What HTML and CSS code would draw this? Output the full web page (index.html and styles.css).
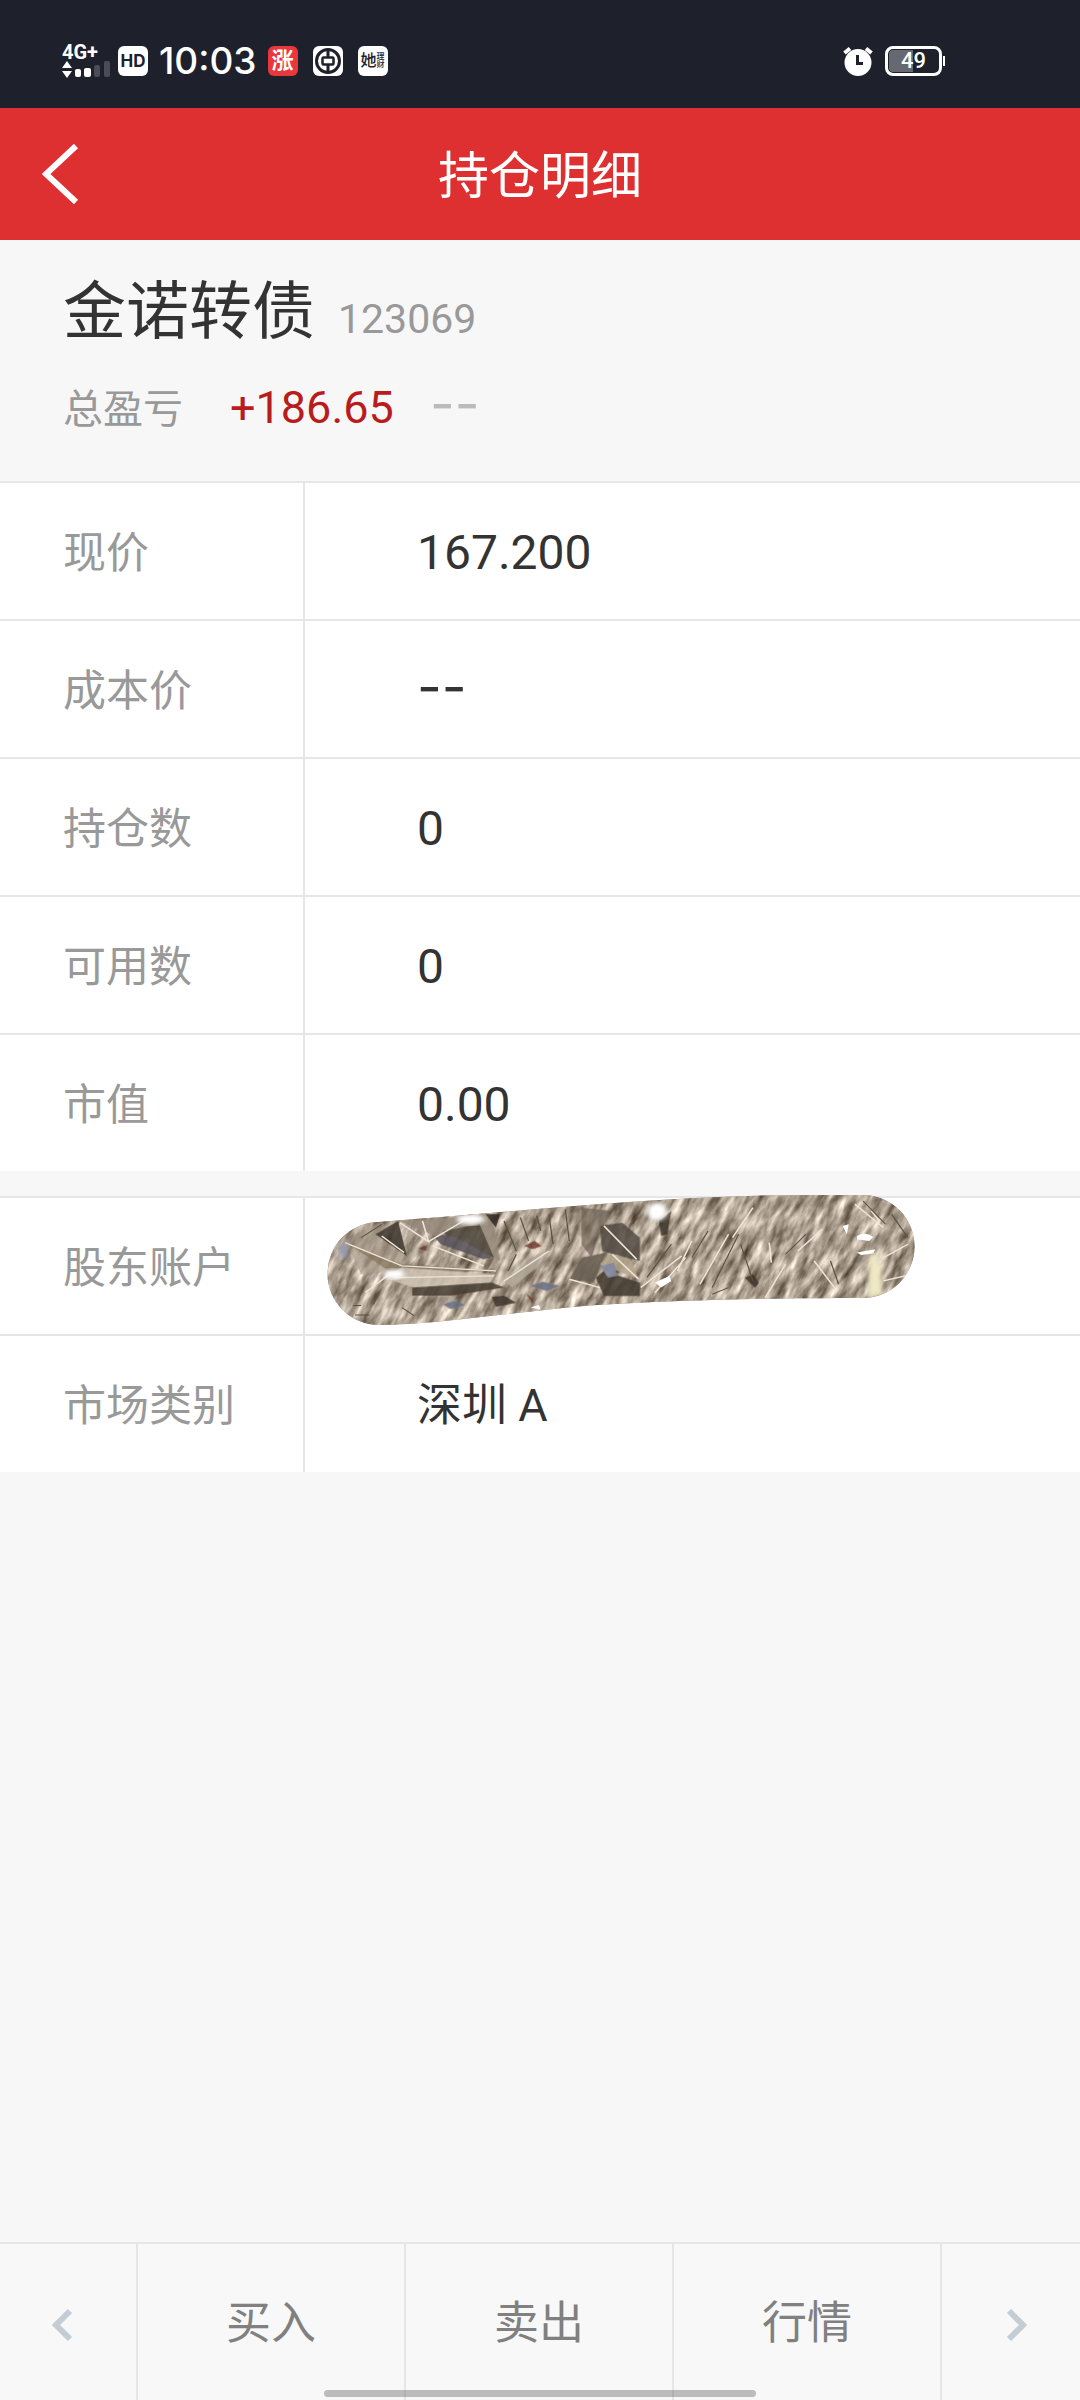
FILE: index.html
```html
<!DOCTYPE html>
<html lang="zh-CN">
<head>
<meta charset="utf-8">
<meta name="viewport" content="width=device-width">
<title>持仓明细</title>
<link rel="stylesheet" href="styles.css">
</head>
<body>
<div class="status">
  <div class="status-group">
    <div class="signal">
      <span class="network">4G+</span>
      <svg width="50" height="18" viewBox="0 0 50 18">
        <path d="M0 8 5 1l5 7zM0 11h10l-5 7z" fill="#fff"/>
        <rect x="13" y="9" width="6" height="8" rx="2" fill="#fff"/>
        <rect x="22" y="8" width="7" height="9" rx="2" fill="#fff"/>
        <rect x="32" y="5" width="6" height="12" rx="2" fill="#4a4d57"/>
        <rect x="42" y="1" width="6" height="16" rx="2" fill="#4a4d57"/>
      </svg>
    </div>
    <span class="badge badge-hd">HD</span>
    <span class="time">10:03</span>
    <div class="apps">
      <span class="badge badge-rise">涨</span>
      <svg width="30" height="30" viewBox="0 0 30 30">
        <rect width="30" height="30" rx="6" fill="#fff"/>
        <circle cx="15" cy="15" r="11.5" fill="none" stroke="#1e212b" stroke-width="3"/>
        <path d="M15 4v7M15 19v7" stroke="#1e212b" stroke-width="3"/>
        <rect x="9.500" y="11.500" width="11" height="7" rx="1" fill="none" stroke="#1e212b" stroke-width="2.500"/>
      </svg>
      <span class="badge badge-her">她<small>理<br>财</small></span>
    </div>
  </div>
  <div class="status-group status-right">
    <svg width="30" height="30" viewBox="0 0 30 30">
      <circle cx="15" cy="16.500" r="13.500" fill="#fff"/>
      <path d="M1.500 7 7 2.500M23 2.500 28.500 7" stroke="#fff" stroke-width="4"/>
      <path d="M14.500 9v8.500H20" fill="none" stroke="#1e212b" stroke-width="3"/>
    </svg>
    <div class="battery"><span>49</span></div>
  </div>
</div>

<header class="header">
  <button class="back" aria-label="返回">
    <svg width="38" height="62" viewBox="0 0 38 62"><path d="M34 3 4 31l30 28" fill="none" stroke="#fff" stroke-width="6"/></svg>
  </button>
  <h1>持仓明细</h1>
</header>

<main class="main">
  <section class="summary">
    <div class="line"><h2>金诺转债</h2><span class="code">123069</span></div>
    <div class="line"><span class="total">总盈亏</span><span class="profit">+186.65</span><span class="rate dash">--</span></div>
  </section>

  <table class="details">
    <tr><th scope="row">现价</th><td>167.200</td></tr>
    <tr><th scope="row">成本价</th><td class="dash">--</td></tr>
    <tr><th scope="row">持仓数</th><td>0</td></tr>
    <tr><th scope="row">可用数</th><td>0</td></tr>
    <tr><th scope="row">市值</th><td>0.00</td></tr>
  </table>

  <table class="details">
    <tr><th scope="row">股东账户</th><td class="account">
      <svg class="mask" width="588" height="136" viewBox="0 0 588 136" role="img" aria-label="已遮挡">
        <defs>
          <clipPath id="pill"><path d="M52 31C200 20 340 4 485 4L536 4A51 51 0 0 1 536 107C420 107 340 110 270 114C200 119 110 134 52 134A51 51 0 0 1 52 31Z"/></clipPath>
          <filter id="grain" x="0" y="0" width="100%" height="100%" color-interpolation-filters="sRGB">
            <feTurbulence type="fractalNoise" baseFrequency=".04 .13" numOctaves="4" seed="8"/>
            <feColorMatrix values="1 0 0 0 .17 1 0 0 0 .12 1 0 0 0 .06 0 0 0 0 1"/>
          </filter>
          <filter id="glow"><feGaussianBlur stdDeviation="7"/></filter>
        </defs>
        <g clip-path="url(#pill)">
          <rect width="588" height="136" fill="#a89b8d"/>
          <rect x="-60" y="-340" width="700" height="860" transform="rotate(-62 290 68)" filter="url(#grain)"/>
          <g transform="translate(-27 -20) scale(.408 .333)">
            <g opacity=".85">
              <path d="M110 210 200 150 270 260 245 300 150 310Z" fill="#a99b8a" opacity=".7"/>
              <path d="M185 190 240 150 262 255Z" fill="#3b332c"/>
              <path d="M245 150 470 130 490 270 340 200Z" fill="#968a7b"/>
              <path d="M350 180 440 160 475 260 370 215Z" fill="#4c443a"/>
              <path d="M120 220 250 280 480 300 230 310Z" fill="#8b7b64"/>
              <path d="M200 320 250 290 480 310 460 345 280 350Z" fill="#cfc3b3"/>
              <path d="M275 350 470 335 500 350 370 375H275Z" fill="#453b30"/>
              <path d="M330 200Q345 185 385 200L470 260 450 265 345 220Z" fill="#555058"/>
              <path d="M455 130H490L480 170Z" fill="#2d2721"/>
              <path d="M500 330 600 235 580 290 520 350Z" fill="#b2a99a"/>
              <path d="M690 110 765 120 735 180 715 260 690 220Z" fill="#5a5044" opacity=".7"/>
              <path d="M735 165 790 155 833 200V270L740 240Z" fill="#514940"/>
              <path d="M660 325 690 260 750 245 720 335Z" fill="#665d50"/>
              <path d="M725 320 745 300 833 335V375H745Z" fill="#40382f"/>
              <path d="M735 280 760 250 810 265 830 325Z" fill="#b6a68d"/>
              <path d="M735 285 770 275 778 315 755 320Z" fill="#858ba3"/>
              <path d="M565 345 595 332 635 345 605 360ZM350 400 380 390 405 402 370 415Z" fill="#687086"/>
              <path d="M550 225 575 210 592 225 570 235ZM290 232 312 222 308 240ZM555 368 572 385 570 400Z" fill="#713b2d"/>
              <path d="M470 378 500 374 530 395 480 408ZM1090 320 1110 310 1125 335 1115 350ZM880 150 910 120 900 190 885 195Z" fill="#3c332b"/>
            </g>
            <g fill="none" stroke="#eee5d8" stroke-width="4">
              <path d="M110 215 250 285 480 300M200 195 255 245M325 225 450 285M245 155 315 212 300 150M315 212 400 150M230 320 475 315M745 165 825 265M765 250 830 325M500 330 610 240M660 325 735 350M160 365 225 305"/>
              <path d="M835 350 935 255M870 365 945 260M925 300 960 210M980 340 1050 190M1060 200 1110 110M1150 215 1155 275M1140 380 1190 280M1260 270 1310 350M1220 240 1280 175M1360 100 1430 170M1400 120 1420 150M1430 260 1490 220M1430 330 1500 310"/>
            </g>
            <g fill="none" stroke="#5b5044" stroke-width="3">
              <path d="M500 150 530 240M540 140 560 210M580 135 590 180M610 130 620 220M650 115 660 210M510 300 530 250M850 320 910 220M960 260 1000 180M1010 350 1075 190M1080 220 1110 330M1190 250 1240 190M1300 270 1320 340M1380 90 1435 160M1450 130 1490 200M1050 350 1010 370M200 160 150 200M190 370 180 400M250 410 280 435M130 404H150M135 432H170"/>
            </g>
            <path d="M1330 165 1345 160 1340 190ZM1365 195Q1385 180 1405 198L1395 210 1365 205ZM1365 245 1410 235 1405 248 1375 252ZM870 335 905 315 910 330 885 350ZM565 410 585 402 590 416Z" fill="#fff"/>
            <path d="M1395 250H1420L1430 375H1390Z" fill="#eee8c5" filter="url(#glow)"/>
            <ellipse cx="875" cy="122" rx="25" ry="27" fill="#fff" filter="url(#glow)"/>
            <ellipse cx="418" cy="145" rx="35" ry="16" fill="#fff" filter="url(#glow)"/>
            <ellipse cx="230" cy="310" rx="28" ry="14" fill="#fff" filter="url(#glow)"/>
            <ellipse cx="108" cy="240" rx="12" ry="23" fill="#9599ae" filter="url(#glow)"/>
          </g>
        </g>
      </svg>
    </td></tr>
    <tr><th scope="row">市场类别</th><td class="market">深圳 A</td></tr>
  </table>
</main>

<nav class="toolbar">
  <button class="step prev" aria-label="上一个"><svg width="22" height="34" viewBox="0 0 22 34"><path d="M19 3 5 17l14 14" fill="none" stroke="#c5cdd4" stroke-width="6"/></svg></button>
  <button class="action">买入</button>
  <button class="action">卖出</button>
  <button class="action">行情</button>
  <button class="step next" aria-label="下一个"><svg width="22" height="34" viewBox="0 0 22 34"><path d="M3 3l14 14L3 31" fill="none" stroke="#c5cdd4" stroke-width="6"/></svg></button>
  <span class="home"></span>
</nav>
</body>
</html>
```
FILE: styles.css
```css
* { box-sizing: border-box; }
body {
  margin: 0;
  min-height: 100vh;
  display: flex;
  flex-direction: column;
  background: #f7f7f7;
  color: #333;
  font-family: Roboto, "Noto Sans CJK SC", sans-serif;
}
button { border: 0; background: none; padding: 0; font: inherit; color: inherit; }
svg { display: block; }
h1, h2 { margin: 0; font-weight: 400; }

.status {
  height: 108px;
  padding: 14px 138px 0 62px;
  display: flex;
  align-items: center;
  justify-content: space-between;
  background: #1e212b;
  color: #fff;
}
.status-group { display: flex; align-items: center; }
.status-right { gap: 12px; }
.signal { width: 50px; margin-right: 6px; }
.network { display: block; font: 700 20px/16px Roboto, sans-serif; }
.badge {
  width: 30px;
  height: 30px;
  border-radius: 6px;
  display: flex;
  align-items: center;
  justify-content: center;
  background: #fff;
  color: #1e212b;
}
.badge-hd { font: 700 17px/30px Inter, sans-serif; }
.badge-rise { background: #e8383d; color: #fff; font-size: 22px; font-weight: 700; line-height: 30px; }
.badge-her { font-size: 16px; font-weight: 500; line-height: 30px; }
.badge-her small { font-size: 8px; line-height: 8px; }
.time { margin: 0 11px; font: 500 37px/40px Inter, sans-serif; }
.apps { display: flex; gap: 15px; }
.battery {
  position: relative;
  width: 57px;
  height: 30px;
  border: 3px solid #fff;
  border-radius: 8px;
  background: linear-gradient(90deg, #666972 49%, #1e212b 49%);
  box-shadow: inset 0 0 0 1px #1e212b;
  font: 500 22px/24px Roboto, sans-serif;
  text-align: center;
}
.battery::after {
  content: "";
  position: absolute;
  right: -6px;
  top: 7px;
  width: 2px;
  height: 10px;
  background: #fff;
}

.header {
  height: 132px;
  display: grid;
  grid-template-columns: 120px 1fr 120px;
  align-items: center;
  background: #de3031;
  color: #fff;
}
.header h1 { padding-top: 6px; text-align: center; font-size: 51px; line-height: 60px; }
.back { height: 132px; padding-left: 42px; }

.main { flex: 1; }
.summary { padding: 30px 63px 28px; }
.line { display: flex; align-items: baseline; }
.line h2 { font-size: 63px; line-height: 84px; }
.code { margin-left: 23px; font-size: 41px; color: #999; }
.line + .line { margin-top: 6px; line-height: 87px; }
.total { width: 167px; font-size: 40px; color: #999; }
.profit { width: 200px; font-size: 45px; color: #b81c1c; }
.line .rate { font-size: 54px; color: #bbb; }
.dash { font-family: Inter, sans-serif; }

.details {
  width: 100%;
  table-layout: fixed;
  border-collapse: separate;
  border-spacing: 0;
  background: #fff;
}
.details + .details { margin-top: 25px; }
.details th, .details td { height: 138px; border-top: 2px solid #e6e6e6; text-align: left; font-weight: 400; line-height: 60px; }
.details th { width: 305px; padding: 3px 0 0 63px; border-right: 2px solid #e6e6e6; font-size: 43px; color: #999; }
.details td { padding: 4px 0 0 112px; font-size: 48px; }
.details .dash { padding: 0 0 4px 112px; font-size: 54px; }
.details .market { font-size: 45px; }
.account { position: relative; }
.mask { position: absolute; left: 22px; top: -7px; }

.toolbar {
  position: relative;
  height: 158px;
  display: grid;
  grid-template-columns: 136px 1fr 1fr 1fr 140px;
  border-top: 2px solid #e6e6e6;
  background: #f8f8f8;
  color: #808080;
  font-size: 45px;
}
.toolbar button + button { border-left: 2px solid #e6e6e6; }
.action { padding-bottom: 6px; }
.step { display: flex; align-items: center; justify-content: center; }
.prev { padding: 6px 12px 0 0; }
.next { padding: 6px 0 0 12px; }
.home {
  position: absolute;
  left: 30%;
  right: 30%;
  bottom: 3px;
  height: 7px;
  border-radius: 4px;
  background: rgba(0, 0, 0, .24);
}
```
